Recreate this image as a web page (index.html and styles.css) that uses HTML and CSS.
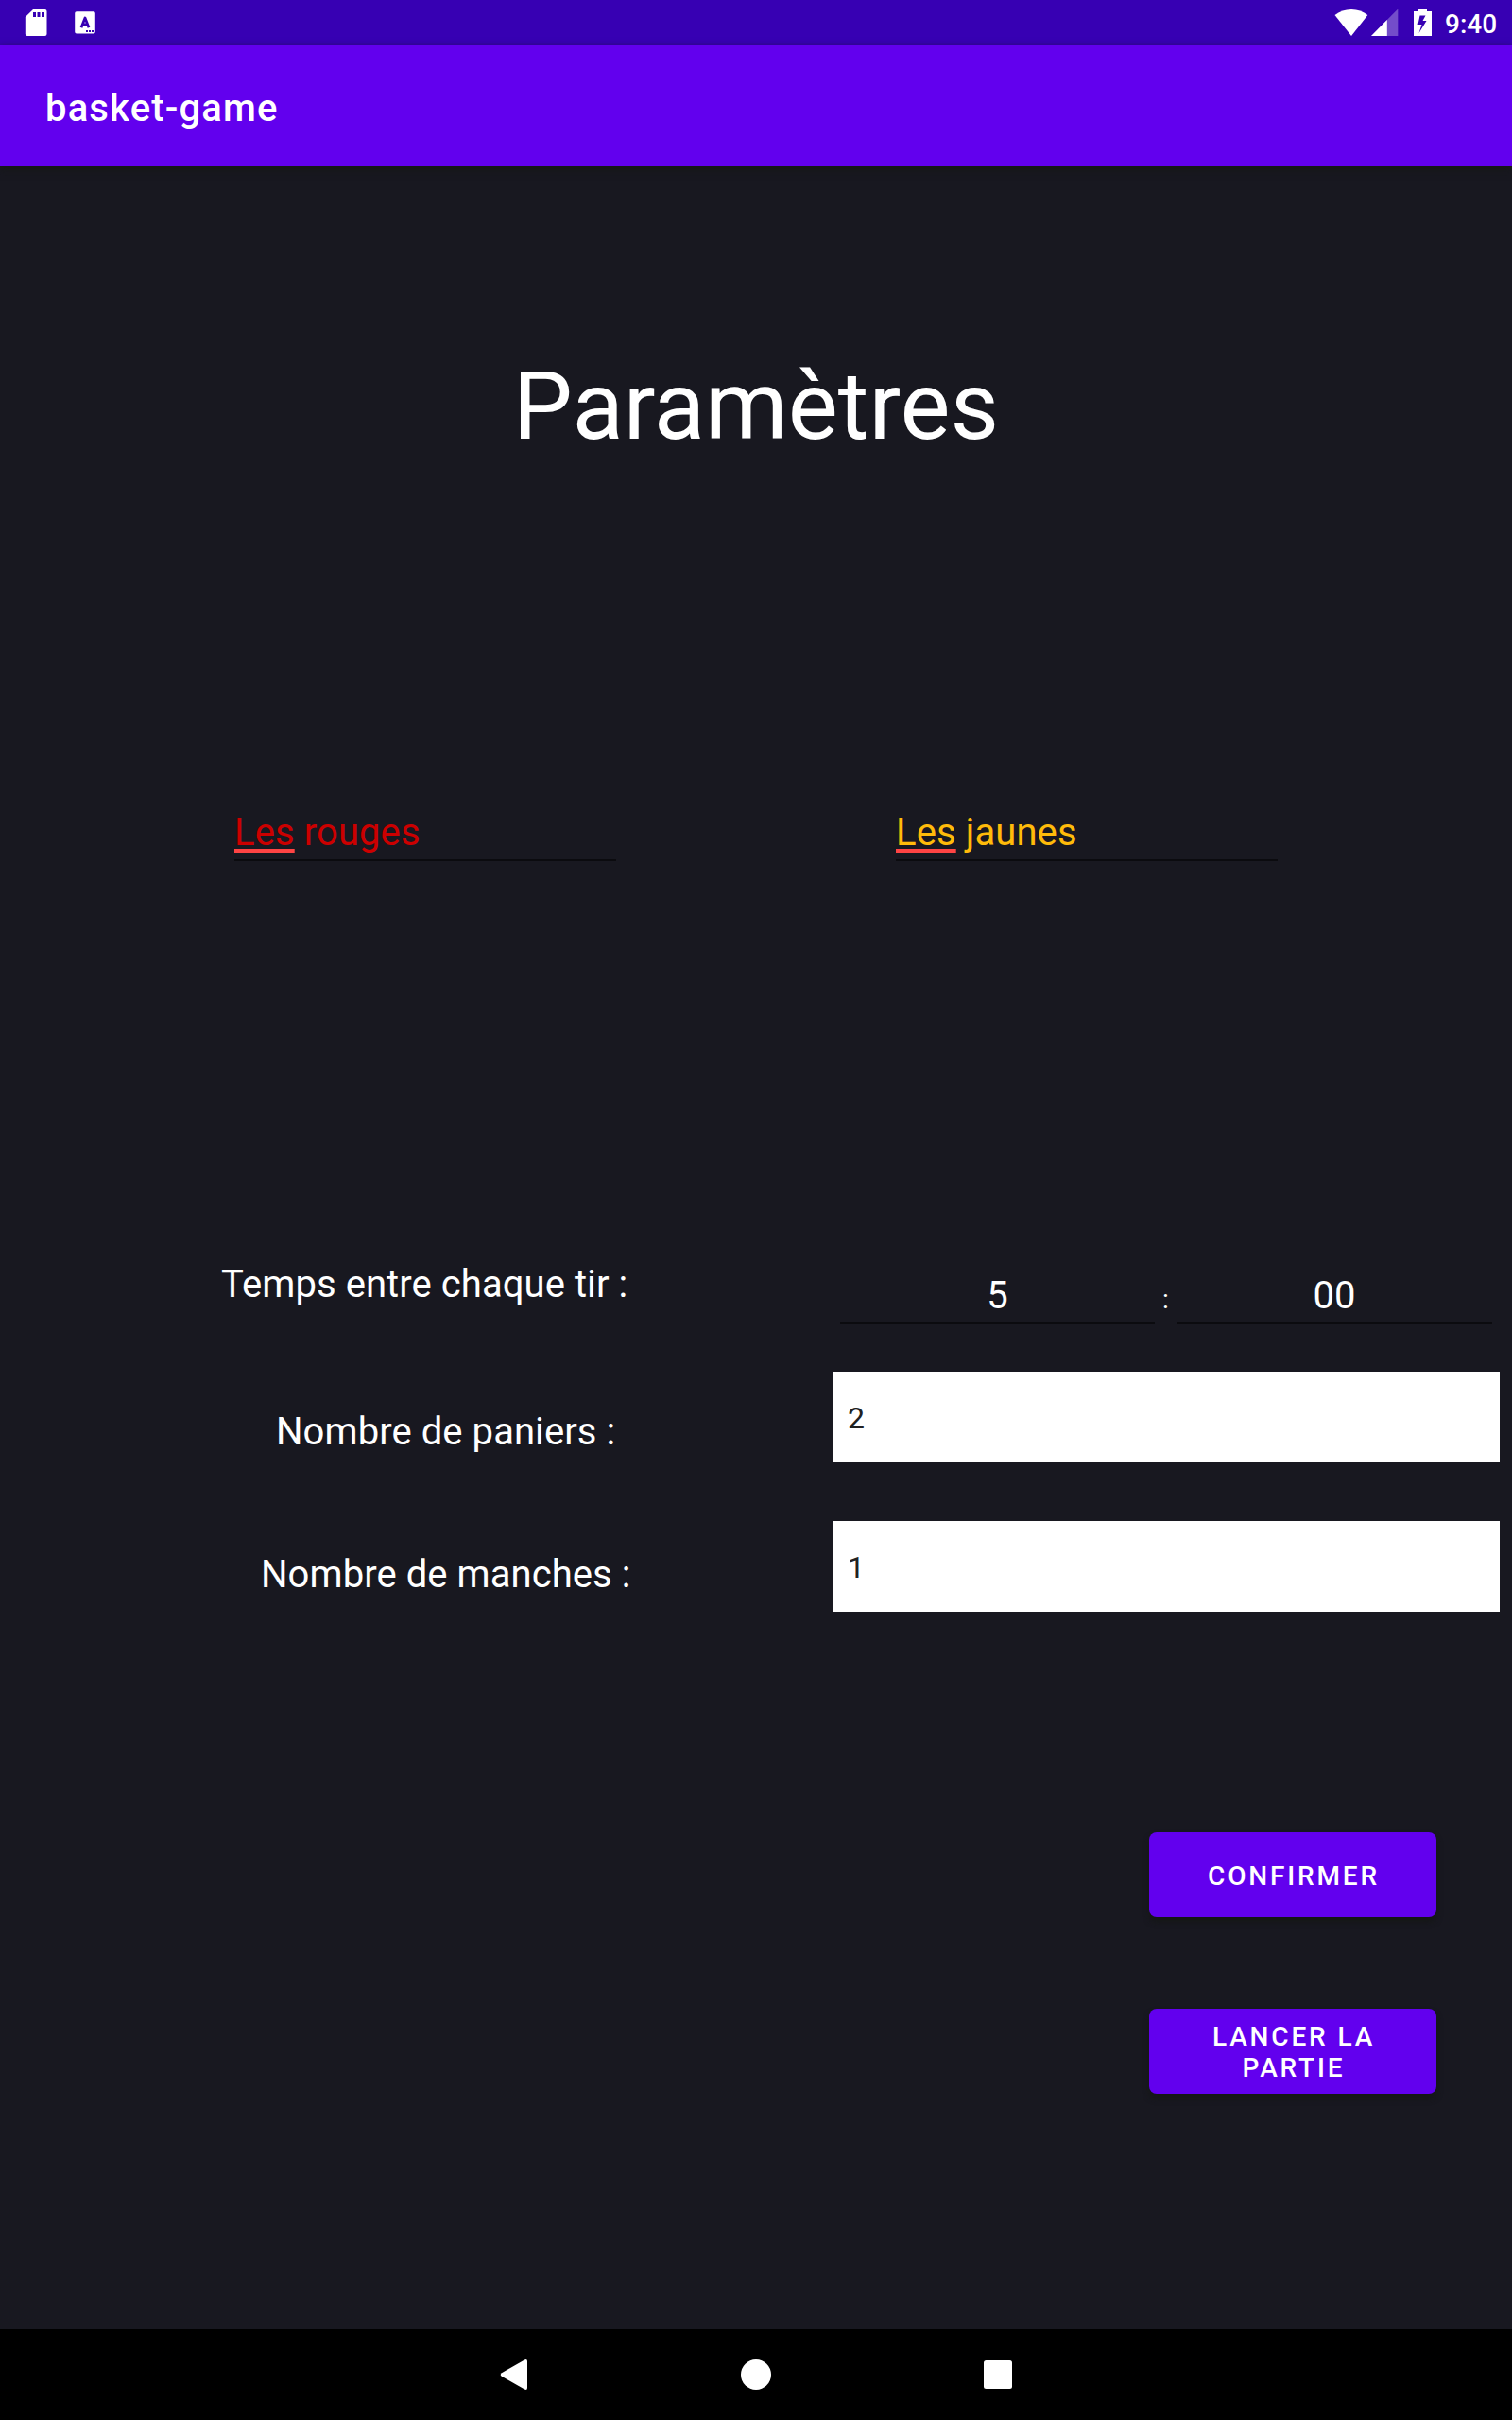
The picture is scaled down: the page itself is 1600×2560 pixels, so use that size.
FILE: index.html
```html
<!DOCTYPE html>
<html lang="fr">
<head>
<meta charset="utf-8">
<title>basket-game</title>
<link rel="stylesheet" href="styles.css">
</head>
<body>
<div class="status-bar">
  <svg class="status-icons" width="120" height="48" viewBox="0 0 120 48" fill="#fff">
    <path fill-rule="evenodd" d="M35 10H47.500a2 2 0 0 1 2 2V36a2 2 0 0 1-2 2H28.800a2 2 0 0 1-2-2V18ZM35 13v5h3v-5ZM39.500 13v5h3v-5ZM44 13v5h3v-5Z"/>
    <path fill-rule="evenodd" d="M81 12.300H99a1.800 1.800 0 0 1 1.800 1.800V33.800a1.800 1.800 0 0 1-1.800 1.800H81a1.800 1.800 0 0 1-1.800-1.800V14.100a1.800 1.800 0 0 1 1.800-1.800ZM91 32v2h2v-2ZM94 32v2h2v-2ZM97 32v2h2v-2Z"/>
    <path d="M86 29.300 90 19 94 29.300M87.500 26h5" fill="none" stroke="#3700b3" stroke-width="2.800" stroke-linejoin="round"/>
  </svg>
  <svg class="status-icons" width="120" height="48" viewBox="1410 0 120 48" fill="#fff">
    <path d="M1412.500 16Q1420 10 1430 10T1447.300 16L1430 38Z"/>
    <path d="M1479.300 9.500V38H1451Z" fill-opacity=".3"/>
    <path d="M1467.800 21V38H1451Z"/>
    <path fill-rule="evenodd" d="M1501 9h9v3h5v26h-19V12h5ZM1502.500 16.500 1500.500 26h4l-3 9 8-13h-4l3-5.500Z"/>
  </svg>
  <span class="clock">9:40</span>
</div>
<header class="app-bar">basket-game</header>
<main class="screen">
  <h1 class="title">Paramètres</h1>
  <div class="teams">
    <div class="field red"><span class="misspelled">Les</span> rouges</div>
    <div class="field yellow"><span class="misspelled">Les</span> jaunes</div>
  </div>
  <div class="row time-row">
    <span class="label label-time">Temps entre chaque tir :</span>
    <div class="time">
      <div class="field minutes">5</div>
      <span class="colon">:</span>
      <div class="field seconds">00</div>
    </div>
  </div>
  <div class="row baskets-row">
    <span class="label label-baskets">Nombre de paniers :</span>
    <div class="box">2</div>
  </div>
  <div class="row rounds-row">
    <span class="label label-rounds">Nombre de manches :</span>
    <div class="box">1</div>
  </div>
  <div class="actions">
    <button class="button">CONFIRMER</button>
    <button class="button">LANCER LA PARTIE</button>
  </div>
</main>
<nav class="nav-bar">
  <svg width="34" height="34" viewBox="0 0 34 34" fill="#fff"><path d="M28 1.400Q31 0 31 3V31Q31 34 28 32.600L3.800 18.800Q1.600 17 3.800 15.200Z"/></svg>
  <svg width="34" height="34" viewBox="0 0 34 34" fill="#fff"><circle cx="17" cy="17" r="16"/></svg>
  <svg width="34" height="34" viewBox="0 0 34 34" fill="#fff"><rect x="2" y="2" width="30" height="30" rx="2.500"/></svg>
</nav>
</body>
</html>
```
FILE: styles.css
```css
* { box-sizing: border-box; }
body {
  margin: 0;
  width: 1600px;
  height: 2560px;
  display: flex;
  flex-direction: column;
  background: #181820;
  color: #fff;
  font-family: Roboto, sans-serif;
  font-size: 40px;
  line-height: 50px;
}
svg { display: block; }
.status-bar {
  height: 48px;
  display: flex;
  background: #3700b3;
}
.status-icons + .status-icons { margin-left: 1290px; }
.clock {
  margin-left: -1px;
  font-size: 28px;
  font-weight: 500;
  line-height: 52px;
  white-space: nowrap;
}
.app-bar {
  height: 128px;
  padding: 42px 48px 0;
  background: #6200ee;
  font-weight: 500;
  letter-spacing: 1.15px;
  box-shadow: 0 3px 8px rgba(20, 22, 20, 0.8);
}
.screen { height: 2288px; }
.title {
  margin: 195px 0 0;
  font-size: 100px;
  font-weight: 400;
  line-height: 118px;
  text-align: center;
}
.teams {
  display: flex;
  gap: 296px;
  margin: 367px 0 0 248px;
}
.field {
  height: 55px;
  border-bottom: 2px solid #0b0b0f;
}
.teams .field {
  width: 404px;
  letter-spacing: 0.1px;
}
.red { color: #cc0000; }
.yellow { color: #ffbb0a; }
.misspelled {
  text-decoration: underline 4px #ff4444;
  text-underline-offset: 4px;
  text-decoration-skip-ink: none;
}
.row { display: flex; }
.label {
  width: 881px;
  letter-spacing: 0.07px;
}
.time-row { margin-top: 423px; }
.baskets-row { margin-top: 50px; }
.rounds-row { margin-top: 62px; }
.label-time { padding-left: 234px; }
.label-baskets { padding: 39px 0 0 292px; }
.label-rounds { padding: 32px 0 0 276px; }
.time {
  display: flex;
  height: 67px;
  padding: 12px 0 0 8px;
  text-align: center;
}
.minutes { width: 333px; }
.seconds { width: 334px; }
.colon {
  width: 23px;
  font-size: 28px;
  line-height: 58px;
}
.box {
  width: 706px;
  height: 96px;
  padding-left: 16px;
  background: #fff;
  color: #212121;
  font-size: 32px;
  line-height: 98px;
}
.actions {
  display: flex;
  flex-direction: column;
  gap: 97px;
  margin: 233px 0 0 1216px;
}
.button {
  width: 304px;
  height: 90px;
  padding: 2px 30px 0 32px;
  border: 0;
  border-radius: 8px;
  background: #6200ee;
  color: #fff;
  font: 500 28px/33px Roboto, sans-serif;
  letter-spacing: 2.85px;
  box-shadow: 0 5px 6px rgba(20, 22, 20, 0.8);
}
.nav-bar {
  height: 96px;
  display: flex;
  gap: 222px;
  padding: 31px 0 0 527px;
  background: #000;
}
```
